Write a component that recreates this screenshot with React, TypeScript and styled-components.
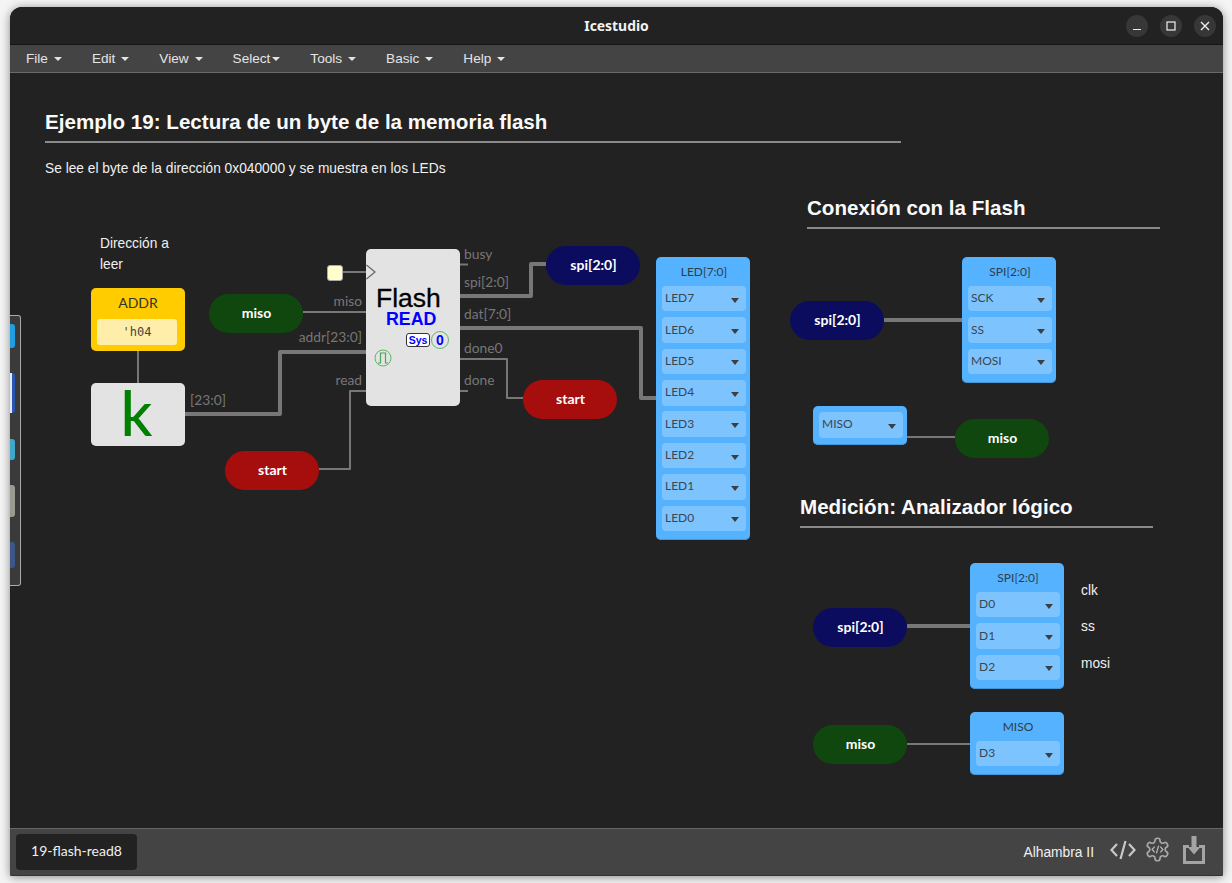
import React from 'react';
import styled, { createGlobalStyle } from 'styled-components';

const GlobalStyle = createGlobalStyle`
  html, body {
    margin: 0;
    padding: 0;
    height: 100%;
    background: #f4f4f4;
    overflow: hidden;
  }
  * { box-sizing: border-box; }
`;

const MENU = ['File', 'Edit', 'View', 'Select', 'Tools', 'Basic', 'Help'];

// wires in page coordinates
const WIRES: { d: string; thick?: boolean }[] = [
  { d: 'M342 272H366' },
  { d: 'M303 312H366' },
  { d: 'M185 414H280V352H366', thick: true },
  { d: 'M319 469H350V391H366' },
  { d: 'M138 351V383' },
  { d: 'M460 264.500H468' },
  { d: 'M460 296H531V264H546', thick: true },
  { d: 'M460 328H641V398H656', thick: true },
  { d: 'M460 359H507V398H523' },
  { d: 'M460 391H468' },
  { d: 'M884 320H962', thick: true },
  { d: 'M907 437H955' },
  { d: 'M907 626H970', thick: true },
  { d: 'M907 744H970' },
];

const LEDS = ['LED7', 'LED6', 'LED5', 'LED4', 'LED3', 'LED2', 'LED1', 'LED0'];

const App = () => {
  return (
    <Page>
      <GlobalStyle />
      <Window>
        <TitleBar>
          <AppTitle>Icestudio</AppTitle>
          <WindowButtons>
            <RoundButton>
              <svg width="10" height="10" viewBox="0 0 10 10"><path d="M1 8.500H9" stroke="#eee" strokeWidth="1.2" /></svg>
            </RoundButton>
            <RoundButton>
              <svg width="10" height="10" viewBox="0 0 10 10"><rect x="1" y="1" width="8" height="8" fill="none" stroke="#eee" strokeWidth="1.2" /></svg>
            </RoundButton>
            <RoundButton>
              <svg width="10" height="10" viewBox="0 0 10 10"><path d="M1 1L9 9M9 1L1 9" stroke="#eee" strokeWidth="1.4" /></svg>
            </RoundButton>
          </WindowButtons>
        </TitleBar>

        <MenuBar>
          {MENU.map((item) => (
            <MenuItem key={item}>
              {item}
              <Caret $tight={item === 'Select'} />
            </MenuItem>
          ))}
        </MenuBar>

        <Canvas>
          <Sheet>
            <Wires width="1232" height="883">
              {WIRES.map((w) => (
                <path key={w.d} d={w.d} fill="none" stroke="#777" strokeWidth={w.thick ? 4 : 2} strokeLinejoin="round" />
              ))}
            </Wires>

            <Heading $x={45} $y={110} $w={856}>Ejemplo 19: Lectura de un byte de la memoria flash</Heading>
            <Note $x={45} $y={158}>Se lee el byte de la dirección 0x040000 y se muestra en los LEDs</Note>
            <Note $x={100} $y={233}>Dirección a<br />leer</Note>
            <Heading $x={807} $y={196} $w={353}>Conexión con la Flash</Heading>
            <Heading $x={800} $y={495} $w={353}>Medición: Analizador lógico</Heading>
            <Note $x={1081} $y={580}>clk</Note>
            <Note $x={1081} $y={616}>ss</Note>
            <Note $x={1081} $y={653}>mosi</Note>

            <ConstantBlock $x={91} $y={288}>
              <ConstantName>ADDR</ConstantName>
              <ConstantValue>'h04</ConstantValue>
            </ConstantBlock>
            <LetterBlock $x={91} $y={383}>k</LetterBlock>

            <ClockInput $x={327} $y={265} />

            <FlashBlock $x={366} $y={249}>
              <ClockMark width="11" height="16" viewBox="0 0 11 16">
                <path d="M0.500 1L9 8L0.500 15" fill="none" stroke="#666" strokeWidth="1.2" />
              </ClockMark>
              <FlashTitle>Flash</FlashTitle>
              <FlashSub>READ</FlashSub>
              <BadgeRow>
                <SysBadge>Sys</SysBadge>
                <ZeroBadge>0</ZeroBadge>
              </BadgeRow>
              <PulseBadge>
                <svg width="18" height="18" viewBox="0 0 18 18">
                  <circle cx="9" cy="9" r="8" fill="none" stroke="#5fb86a" strokeWidth="1" />
                  <path d="M4 14H6.500V4H11.500V14H14" fill="none" stroke="#4aa856" strokeWidth="1.2" />
                </svg>
              </PulseBadge>
            </FlashBlock>

            <PortLabel $x={362} $y={293} $right>miso</PortLabel>
            <PortLabel $x={362} $y={329} $right>addr[23:0]</PortLabel>
            <PortLabel $x={362} $y={372} $right>read</PortLabel>
            <PortLabel $x={190} $y={392}>[23:0]</PortLabel>
            <PortLabel $x={464} $y={246}>busy</PortLabel>
            <PortLabel $x={464} $y={274}>spi[2:0]</PortLabel>
            <PortLabel $x={464} $y={306}>dat[7:0]</PortLabel>
            <PortLabel $x={464} $y={340}>done0</PortLabel>
            <PortLabel $x={464} $y={372}>done</PortLabel>

            <Pill $x={209} $y={294} $color="#0f470f">miso</Pill>
            <Pill $x={225} $y={451} $color="#a60d0d">start</Pill>
            <Pill $x={546} $y={246} $color="#0c0c5e">spi[2:0]</Pill>
            <Pill $x={523} $y={380} $color="#a60d0d">start</Pill>
            <Pill $x={790} $y={301} $color="#0c0c5e">spi[2:0]</Pill>
            <Pill $x={955} $y={419} $color="#0f470f">miso</Pill>
            <Pill $x={813} $y={608} $color="#0c0c5e">spi[2:0]</Pill>
            <Pill $x={813} $y={725} $color="#0f470f">miso</Pill>

            <PinBlock x={656} y={257} title="LED[7:0]" pins={LEDS} />
            <PinBlock x={962} y={257} title="SPI[2:0]" pins={['SCK', 'SS', 'MOSI']} />
            <PinBlock x={813} y={406} pins={['MISO']} />
            <PinBlock x={970} y={563} title="SPI[2:0]" pins={['D0', 'D1', 'D2']} />
            <PinBlock x={970} y={712} title="MISO" pins={['D3']} />
          </Sheet>
        </Canvas>

        <StatusBar>
          <FileTab>19-flash-read8</FileTab>
          <StatusRight>
            <BoardName>Alhambra II</BoardName>
            <svg width="26" height="22" viewBox="0 0 26 22">
              <path d="M7 5L1.500 11L7 17M19 5L24.500 11L19 17M15.500 2L10.500 20" fill="none" stroke="#c8c8c8" strokeWidth="2.200" />
            </svg>
            <GearIcon width="27" height="27" viewBox="0 0 24 24">
              <path
                d="M12.220 2h-.44a2 2 0 0 0-2 2v.18a2 2 0 0 1-1 1.730l-.43.250a2 2 0 0 1-2 0l-.15-.080a2 2 0 0 0-2.730.730l-.22.380a2 2 0 0 0 .730 2.730l.15.100a2 2 0 0 1 1 1.720v.510a2 2 0 0 1-1 1.740l-.15.090a2 2 0 0 0-.730 2.730l.22.380a2 2 0 0 0 2.730.730l.15-.080a2 2 0 0 1 2 0l.43.250a2 2 0 0 1 1 1.730V20a2 2 0 0 0 2 2h.44a2 2 0 0 0 2-2v-.18a2 2 0 0 1 1-1.730l.43-.250a2 2 0 0 1 2 0l.15.080a2 2 0 0 0 2.730-.730l.22-.390a2 2 0 0 0-.730-2.730l-.15-.080a2 2 0 0 1-1-1.740v-.500a2 2 0 0 1 1-1.740l.15-.090a2 2 0 0 0 .730-2.730l-.22-.380a2 2 0 0 0-2.730-.730l-.15.080a2 2 0 0 1-2 0l-.43-.250a2 2 0 0 1-1-1.730V4a2 2 0 0 0-2-2z"
                fill="none"
                stroke="#a8a8a8"
                strokeWidth="1.500"
              />
              <path d="M9.500 9.500L7.200 12L9.500 14.500M14.500 9.500L16.800 12L14.500 14.500M13 8.500L11 15.500" fill="none" stroke="#b8b8b8" strokeWidth="1.100" />
            </GearIcon>
            <DownloadIcon width="22" height="28" viewBox="0 0 22 28">
              <path d="M6 10.500H1.500V26.500H20.500V10.500H16" fill="none" stroke="#a4a4a4" strokeWidth="3" />
              <path d="M8.500 0V11H4.500L11 18.500L17.500 11H13.500V0z" fill="#a4a4a4" />
            </DownloadIcon>
          </StatusRight>
        </StatusBar>

        <DockEdge>
          <DockIcon $color="#1d9fe2" $height={24} />
          <DockIcon $color="#2a56b0" $height={40} $stripe />
          <DockIcon $color="#3fa7c9" $height={21} />
          <DockIcon $color="#9a9a90" $height={32} />
          <DockIcon $color="#3d5688" $height={26} />
        </DockEdge>
      </Window>
    </Page>
  );
};

interface PinBlockProps {
  x: number;
  y: number;
  title?: string;
  pins: string[];
}

const PinBlock = ({ x, y, title, pins }: PinBlockProps) => {
  return (
    <BlockBox $x={x} $y={y} $titled={!!title}>
      {title && <BlockTitle>{title}</BlockTitle>}
      {pins.map((pin) => (
        <PinRow key={pin}>
          <span>{pin}</span>
          <PinArrow />
        </PinRow>
      ))}
    </BlockBox>
  );
};

const Page = styled.div`
  width: 1232px;
  height: 883px;
  padding: 7px 9px 7px 10px;
`;

const Window = styled.div`
  position: relative;
  height: 100%;
  display: flex;
  flex-direction: column;
  background: #222;
  border-radius: 12px 12px 2px 2px;
  box-shadow: 0 1px 10px rgba(0, 0, 0, 0.45);
  overflow: hidden;
`;

const TitleBar = styled.div`
  position: relative;
  flex: 0 0 38px;
  display: flex;
  align-items: center;
  justify-content: center;
  background: #222;
  border-bottom: 1px solid #151515;
`;

const AppTitle = styled.div`
  font: 700 13.900px 'Noto Sans', 'Open Sans', sans-serif;
  color: #f2f2f2;
`;

const WindowButtons = styled.div`
  position: absolute;
  right: 7px;
  top: 8px;
  display: flex;
  gap: 12px;
`;

const RoundButton = styled.div`
  width: 22px;
  height: 22px;
  border-radius: 50%;
  background: #373737;
  display: flex;
  align-items: center;
  justify-content: center;
`;

const MenuBar = styled.div`
  flex: 0 0 28px;
  display: flex;
  align-items: center;
  gap: 30px;
  padding: 0 0 0 16px;
  background: #444;
  border-bottom: 1px solid #6a6a6a;
`;

const MenuItem = styled.div`
  display: flex;
  align-items: center;
  font: 13.600px 'Liberation Sans', Arial, sans-serif;
  color: #e4e4e4;
`;

const Caret = styled.span<{ $tight?: boolean }>`
  width: 0;
  height: 0;
  margin: 1px 0 0 ${(p) => (p.$tight ? '2px' : '6px')};
  border-left: 4px solid transparent;
  border-right: 4px solid transparent;
  border-top: 4px solid #e4e4e4;
`;

const Canvas = styled.div`
  position: relative;
  flex: 1;
  overflow: hidden;
  background: #222;
`;

// children are placed in page coordinates, the diagram is a free canvas
const Sheet = styled.div`
  position: absolute;
  left: -10px;
  top: -73px;
  width: 1232px;
  height: 883px;
`;

const Wires = styled.svg`
  position: absolute;
  left: 0;
  top: 0;
`;

const Heading = styled.div<{ $x: number; $y: number; $w: number }>`
  position: absolute;
  left: ${(p) => p.$x}px;
  top: ${(p) => p.$y}px;
  width: ${(p) => p.$w}px;
  height: 33px;
  border-bottom: 2px solid #8a8a8a;
  font: 700 20.600px/24px 'Liberation Sans', Arial, sans-serif;
  color: #fafafa;
`;

const Note = styled.div<{ $x: number; $y: number }>`
  position: absolute;
  left: ${(p) => p.$x}px;
  top: ${(p) => p.$y}px;
  font: 13.760px/21px 'Liberation Sans', Arial, sans-serif;
  color: #f0f0f0;
  white-space: nowrap;
`;

const ConstantBlock = styled.div<{ $x: number; $y: number }>`
  position: absolute;
  left: ${(p) => p.$x}px;
  top: ${(p) => p.$y}px;
  width: 94px;
  height: 63px;
  padding: 6px;
  border-radius: 5px;
  background: #ffcc00;
  text-align: center;
`;

const ConstantName = styled.div`
  font: 14px/17px Lato, sans-serif;
  color: #333;
  height: 25px;
`;

const ConstantValue = styled.div`
  height: 26px;
  border-radius: 3px;
  background: #ffeeaa;
  font: 12px/26px 'DejaVu Sans Mono', monospace;
  color: #444;
  margin-right: 2px;
`;

const LetterBlock = styled.div<{ $x: number; $y: number }>`
  position: absolute;
  left: ${(p) => p.$x}px;
  top: ${(p) => p.$y}px;
  width: 94px;
  height: 63px;
  padding-right: 3px;
  border-radius: 5px;
  background: #e3e3e3;
  color: #008000;
  font: 500 62px/58px Lato, sans-serif;
  text-align: center;
`;

const ClockInput = styled.div<{ $x: number; $y: number }>`
  position: absolute;
  left: ${(p) => p.$x}px;
  top: ${(p) => p.$y}px;
  width: 16px;
  height: 16px;
  border-radius: 3px;
  background: #ffffcc;
  border: 1px solid #aaa;
`;

const FlashBlock = styled.div<{ $x: number; $y: number }>`
  position: absolute;
  left: ${(p) => p.$x}px;
  top: ${(p) => p.$y}px;
  width: 94px;
  height: 157px;
  display: flex;
  flex-direction: column;
  padding-top: 37px;
  border-radius: 5px;
  background: #e3e3e3;
  font-family: 'Liberation Sans', Arial, sans-serif;
`;

const ClockMark = styled.svg`
  position: absolute;
  left: 0;
  top: 15px;
`;

const FlashTitle = styled.div`
  margin-left: 10px;
  font-size: 26.500px;
  line-height: 24px;
  color: #000;
  -webkit-text-stroke: 0.3px #000;
`;

const FlashSub = styled.div`
  margin-left: 20px;
  font-size: 17.800px;
  line-height: 18px;
  font-weight: 700;
  color: #0000ff;
`;

const BadgeRow = styled.div`
  display: flex;
  align-items: center;
  justify-content: flex-end;
  gap: 1px;
  margin-top: 3px;
  padding-right: 11px;
`;

const SysBadge = styled.div`
  width: 24px;
  height: 14px;
  border: 1px solid #333;
  border-radius: 3px;
  background: #fff;
  color: #0000ff;
  font-size: 10.500px;
  font-weight: 700;
  line-height: 12px;
  text-align: center;
`;

const ZeroBadge = styled.div`
  width: 18px;
  height: 18px;
  border: 1px solid #5fb86a;
  border-radius: 50%;
  color: #0000ff;
  font-size: 14px;
  font-weight: 700;
  line-height: 16px;
  text-align: center;
`;

const PulseBadge = styled.div`
  width: 18px;
  height: 18px;
  margin-left: 8px;
`;

const PortLabel = styled.div<{ $x: number; $y: number; $right?: boolean }>`
  position: absolute;
  top: ${(p) => p.$y}px;
  ${(p) => (p.$right ? `right: ${1232 - p.$x}px;` : `left: ${p.$x}px;`)}
  font: 13.800px/16px Lato, sans-serif;
  color: #777;
  white-space: nowrap;
`;

const Pill = styled.div<{ $x: number; $y: number; $color: string }>`
  position: absolute;
  left: ${(p) => p.$x}px;
  top: ${(p) => p.$y}px;
  width: 94px;
  height: 39px;
  padding-left: 1px;
  border-radius: 20px;
  background: ${(p) => p.$color};
  color: #fff;
  font: 700 14px/37px Lato, sans-serif;
  text-align: center;
`;

const BlockBox = styled.div<{ $x: number; $y: number; $titled: boolean }>`
  position: absolute;
  left: ${(p) => p.$x}px;
  top: ${(p) => p.$y}px;
  width: 94px;
  display: flex;
  flex-direction: column;
  gap: 5.900px;
  padding: ${(p) => (p.$titled ? '0 4px 8.500px 6px' : '6px 4px 7px 6px')};
  border-radius: 5px;
  background: #54b2ff;
  box-shadow: inset 0 -1px 0 #4596d6;
`;

const BlockTitle = styled.div`
  height: 23px;
  font: 12px/30px Lato, sans-serif;
  color: #2f3d4a;
  text-align: center;
`;

const PinRow = styled.div`
  height: 25.500px;
  display: flex;
  align-items: center;
  justify-content: space-between;
  padding: 0 7px 0 3px;
  border-radius: 4px;
  background: #7dc4ff;
  font: 12px/22px Lato, sans-serif;
  color: #3c4550;

  span {
    margin-top: -1px;
  }
`;

const PinArrow = styled.i`
  width: 0;
  height: 0;
  margin-top: 3px;
  border-left: 4px solid transparent;
  border-right: 4px solid transparent;
  border-top: 5px solid #3a3f45;
`;

const StatusBar = styled.div`
  flex: 0 0 48px;
  display: flex;
  align-items: center;
  justify-content: space-between;
  padding: 0 18px 0 6px;
  background: #444;
  border-top: 1px solid #666;
  border-bottom: 1px solid #333;
`;

const FileTab = styled.div`
  width: 121px;
  height: 36px;
  border-radius: 4px;
  background: #222;
  color: #f0f0f0;
  font: 14px/34px Lato, sans-serif;
  text-align: center;
`;

const StatusRight = styled.div`
  display: flex;
  align-items: center;
  gap: 9px;
  margin-top: -5px;
`;

const BoardName = styled.div`
  margin: 5px 7px 0 0;
  font: 13.800px 'Liberation Sans', Arial, sans-serif;
  color: #f0f0f0;
`;

const GearIcon = styled.svg`
  margin-left: -1px;
`;

const DownloadIcon = styled.svg`
  margin-left: 3px;
`;

const DockEdge = styled.div`
  position: absolute;
  left: 0;
  top: 308px;
  width: 11px;
  height: 271px;
  display: flex;
  flex-direction: column;
  justify-content: space-between;
  padding: 8px 0 17px;
  background: #3a3a3a;
  border: 1px solid #aaa;
  border-left: 0;
  border-radius: 0 3px 3px 0;
`;

const DockIcon = styled.div<{ $height: number; $color: string; $stripe?: boolean }>`
  width: 5px;
  height: ${(p) => p.$height}px;
  background: ${(p) => p.$color};
  border-radius: 0 3px 3px 0;
  border-left: ${(p) => (p.$stripe ? '2px solid #dfe8f8' : '0')};
`;

export default App;
